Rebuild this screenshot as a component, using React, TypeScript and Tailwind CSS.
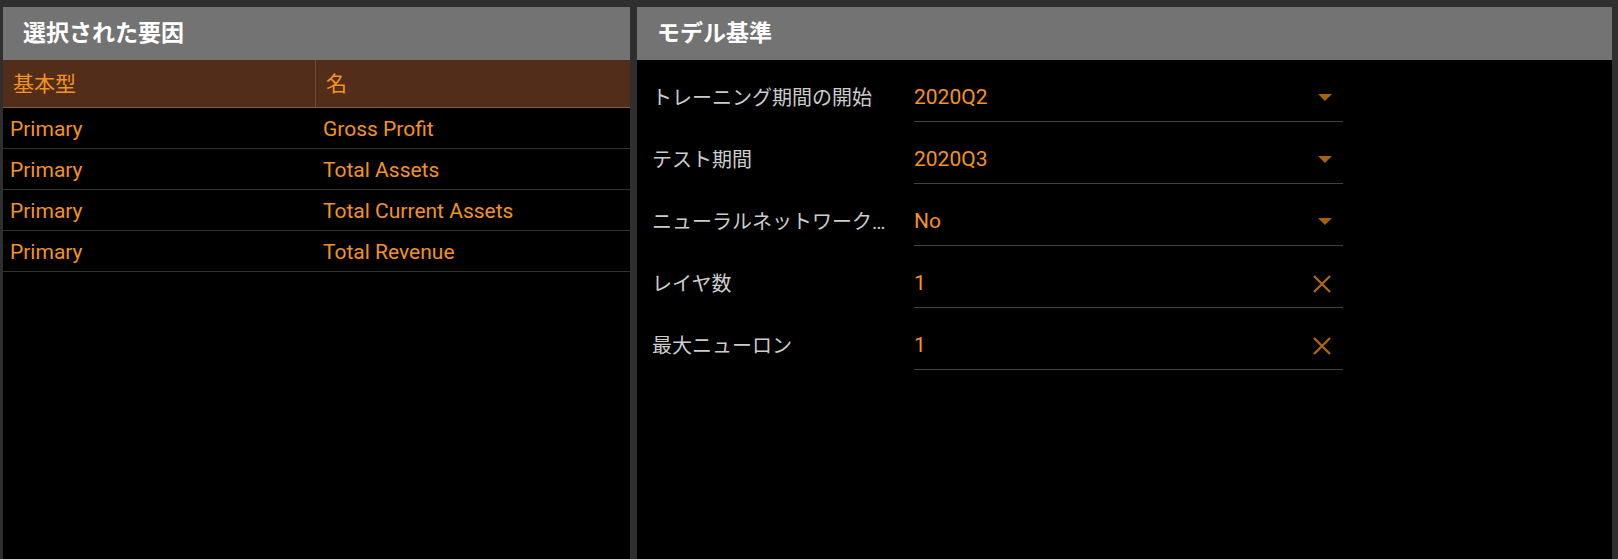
import React from "react";

const factors = [
  { type: "Primary", name: "Gross Profit" },
  { type: "Primary", name: "Total Assets" },
  { type: "Primary", name: "Total Current Assets" },
  { type: "Primary", name: "Total Revenue" },
];

type Field = { label: string; value: string; kind: "select" | "clear" };

const fields: Field[] = [
  { label: "トレーニング期間の開始", value: "2020Q2", kind: "select" },
  { label: "テスト期間", value: "2020Q3", kind: "select" },
  { label: "ニューラルネットワークを使用", value: "No", kind: "select" },
  { label: "レイヤ数", value: "1", kind: "clear" },
  { label: "最大ニューロン", value: "1", kind: "clear" },
];

function CaretDown() {
  return (
    <svg width="14" height="7" viewBox="0 0 14 7" className="block">
      <path d="M0 0 H14 L7 7 Z" fill="#a5610f" />
    </svg>
  );
}

function ClearIcon() {
  return (
    <svg width="20" height="18" viewBox="0 0 20 18" className="block">
      <path d="M2 1 L18 17 M18 1 L2 17" stroke="#a8661a" strokeWidth="2.4" />
    </svg>
  );
}

function PanelHeader({ title }: { title: string }) {
  return (
    <div className="flex h-[53px] shrink-0 items-center bg-[#737373] pl-[20px]">
      <h2 className="text-[23px] font-bold leading-none text-white">{title}</h2>
    </div>
  );
}

export default function App() {
  return (
    <div className="flex h-screen gap-[7px] bg-[#2f2f2f] pl-[3px] pr-[6px] pt-[7px] font-['Roboto','Noto_Sans_CJK_JP',sans-serif]">
      <section className="flex w-[627px] shrink-0 flex-col bg-black">
        <PanelHeader title="選択された要因" />
        <div className="flex h-[48px] border-b border-[#7d5f45] bg-[#522d1a] text-[21px] text-[#f39321]">
          <div className="flex w-[313px] items-center border-r border-[#6e4a30] pl-[10px] pt-[2px]">基本型</div>
          <div className="flex flex-1 items-center pl-[10px] pt-[2px]">名</div>
        </div>
        {factors.map((f) => (
          <div
            key={f.name}
            className="flex h-[41px] items-center border-b border-[#333] pt-[3px] text-[21px] text-[#f39321]"
          >
            <div className="w-[313px] pl-[7px]">{f.type}</div>
            <div className="flex-1 pl-[7px]">{f.name}</div>
          </div>
        ))}
      </section>

      <section className="flex flex-1 flex-col bg-black">
        <PanelHeader title="モデル基準" />
        <div className="pl-[15px]">
          {fields.map((f) => (
            <div key={f.label} className="flex h-[62px] items-end">
              <div className="flex h-[48px] w-[236px] items-center">
                <span className="truncate text-[20px] text-[#cccccc]">{f.label}</span>
              </div>
              <div className="ml-[26px] flex h-[48px] w-[429px] items-center justify-between border-b border-[#4a4034] pr-[11px]">
                <span className="text-[21px] text-[#f39321]">{f.value}</span>
                {f.kind === "select" ? <CaretDown /> : <ClearIcon />}
              </div>
            </div>
          ))}
        </div>
      </section>
    </div>
  );
}
